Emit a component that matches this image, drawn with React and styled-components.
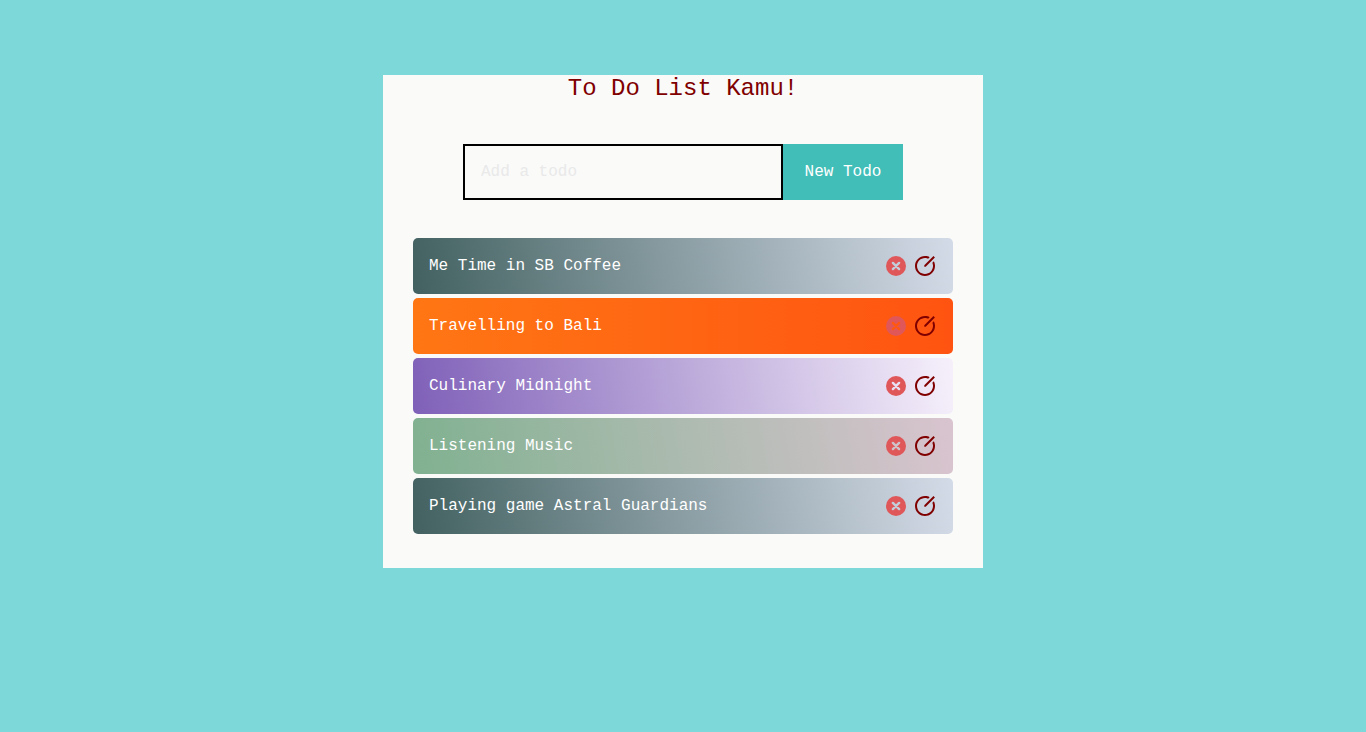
import React, { useId, useState } from "react";
import styled, { createGlobalStyle } from "styled-components";
import { RiEditCircleLine } from "react-icons/ri";

const GlobalStyle = createGlobalStyle`
  *, *::before, *::after {
    box-sizing: border-box;
    margin: 0;
    padding: 0;
  }

  body {
    background: #7dd8da;
    font-family: "Courier New", "Liberation Mono", monospace;
    font-size: 16px;
  }
`;

const Panel = styled.main`
  width: 100%;
  max-width: 600px;
  margin: 75px auto 0;
  padding-bottom: 30px;
  background: #fafaf9;
`;

const Title = styled.h1`
  color: maroon;
  font-size: 24px;
  font-weight: 400;
  line-height: 27px;
  text-align: center;
`;

const TodoForm = styled.form`
  display: flex;
  justify-content: center;
  margin: 42px 16px 38px;
`;

const TodoInput = styled.input`
  flex: 0 1 320px;
  min-width: 0;
  height: 56px;
  padding: 0 16px;
  border: 2px solid #000;
  border-radius: 0;
  outline: none;
  background: transparent;
  color: #333;
  font: inherit;

  &::placeholder {
    color: #e9e9e9;
    opacity: 1;
  }
`;

const AddButton = styled.button`
  flex: 0 0 120px;
  height: 56px;
  border: none;
  background: #40beb7;
  color: #fff;
  font: inherit;
  cursor: pointer;
`;

const TodoList = styled.ul`
  padding: 0 30px;
  list-style: none;
`;

const TodoRow = styled.li`
  display: flex;
  align-items: center;
  justify-content: space-between;
  min-height: 56px;
  margin-bottom: 4px;
  padding: 0 16px;
  border-radius: 5px;
  background: ${({ $background }) => $background};
  color: #fff;
`;

const Actions = styled.div`
  display: flex;
  gap: 5px;
`;

const IconButton = styled.button`
  display: flex;
  border: none;
  background: none;
  color: ${({ $color }) => $color};
  font-size: 24px;
  cursor: pointer;
`;

const gradients = [
  "linear-gradient(80deg, #426160 0%, #d4dbe8 100%)",
  "linear-gradient(90deg, #ff7614 0%, #ff5411 100%)",
  "linear-gradient(80deg, #7f60b8 0%, #f6f0fb 100%)",
  "linear-gradient(80deg, #80b190 0%, #d9c4cf 100%)",
];

const initialTodos = [
  { id: 1, text: "Me Time in SB Coffee" },
  { id: 2, text: "Travelling to Bali" },
  { id: 3, text: "Culinary Midnight" },
  { id: 4, text: "Listening Music" },
  { id: 5, text: "Playing game Astral Guardians" },
];

// Filled disc with a rounded cross cut out, so the row shows through it.
function DeleteIcon() {
  const maskId = useId();
  return (
    <svg viewBox="0 0 24 24" width="1em" height="1em" aria-hidden="true">
      <mask id={maskId}>
        <rect width="24" height="24" fill="#fff" />
        <path
          d="M8.9 8.9l6.2 6.2M15.1 8.9l-6.2 6.2"
          stroke="#000"
          strokeWidth="2.4"
          strokeLinecap="round"
        />
      </mask>
      <circle cx="12" cy="12" r="10" fill="currentColor" mask={`url(#${maskId})`} />
    </svg>
  );
}

export default function App() {
  const [todos, setTodos] = useState(initialTodos);
  const [value, setValue] = useState("");

  const addTodo = (event) => {
    event.preventDefault();
    if (!value.trim()) return;
    setTodos([{ id: Date.now(), text: value.trim() }, ...todos]);
    setValue("");
  };

  const removeTodo = (id) => setTodos(todos.filter((todo) => todo.id !== id));

  const editTodo = (todo) => {
    setValue(todo.text);
    removeTodo(todo.id);
  };

  return (
    <>
      <GlobalStyle />
      <Panel>
        <Title>To Do List Kamu!</Title>
        <TodoForm onSubmit={addTodo}>
          <TodoInput
            type="text"
            aria-label="Add a todo"
            placeholder="Add a todo"
            value={value}
            onChange={(event) => setValue(event.target.value)}
          />
          <AddButton type="submit">New Todo</AddButton>
        </TodoForm>
        <TodoList>
          {todos.map((todo, index) => (
            <TodoRow key={todo.id} $background={gradients[index % gradients.length]}>
              <span>{todo.text}</span>
              <Actions>
                <IconButton
                  type="button"
                  $color="#e05759"
                  aria-label="Delete"
                  onClick={() => removeTodo(todo.id)}
                >
                  <DeleteIcon />
                </IconButton>
                <IconButton
                  type="button"
                  $color="maroon"
                  aria-label="Edit"
                  onClick={() => editTodo(todo)}
                >
                  <RiEditCircleLine />
                </IconButton>
              </Actions>
            </TodoRow>
          ))}
        </TodoList>
      </Panel>
    </>
  );
}
